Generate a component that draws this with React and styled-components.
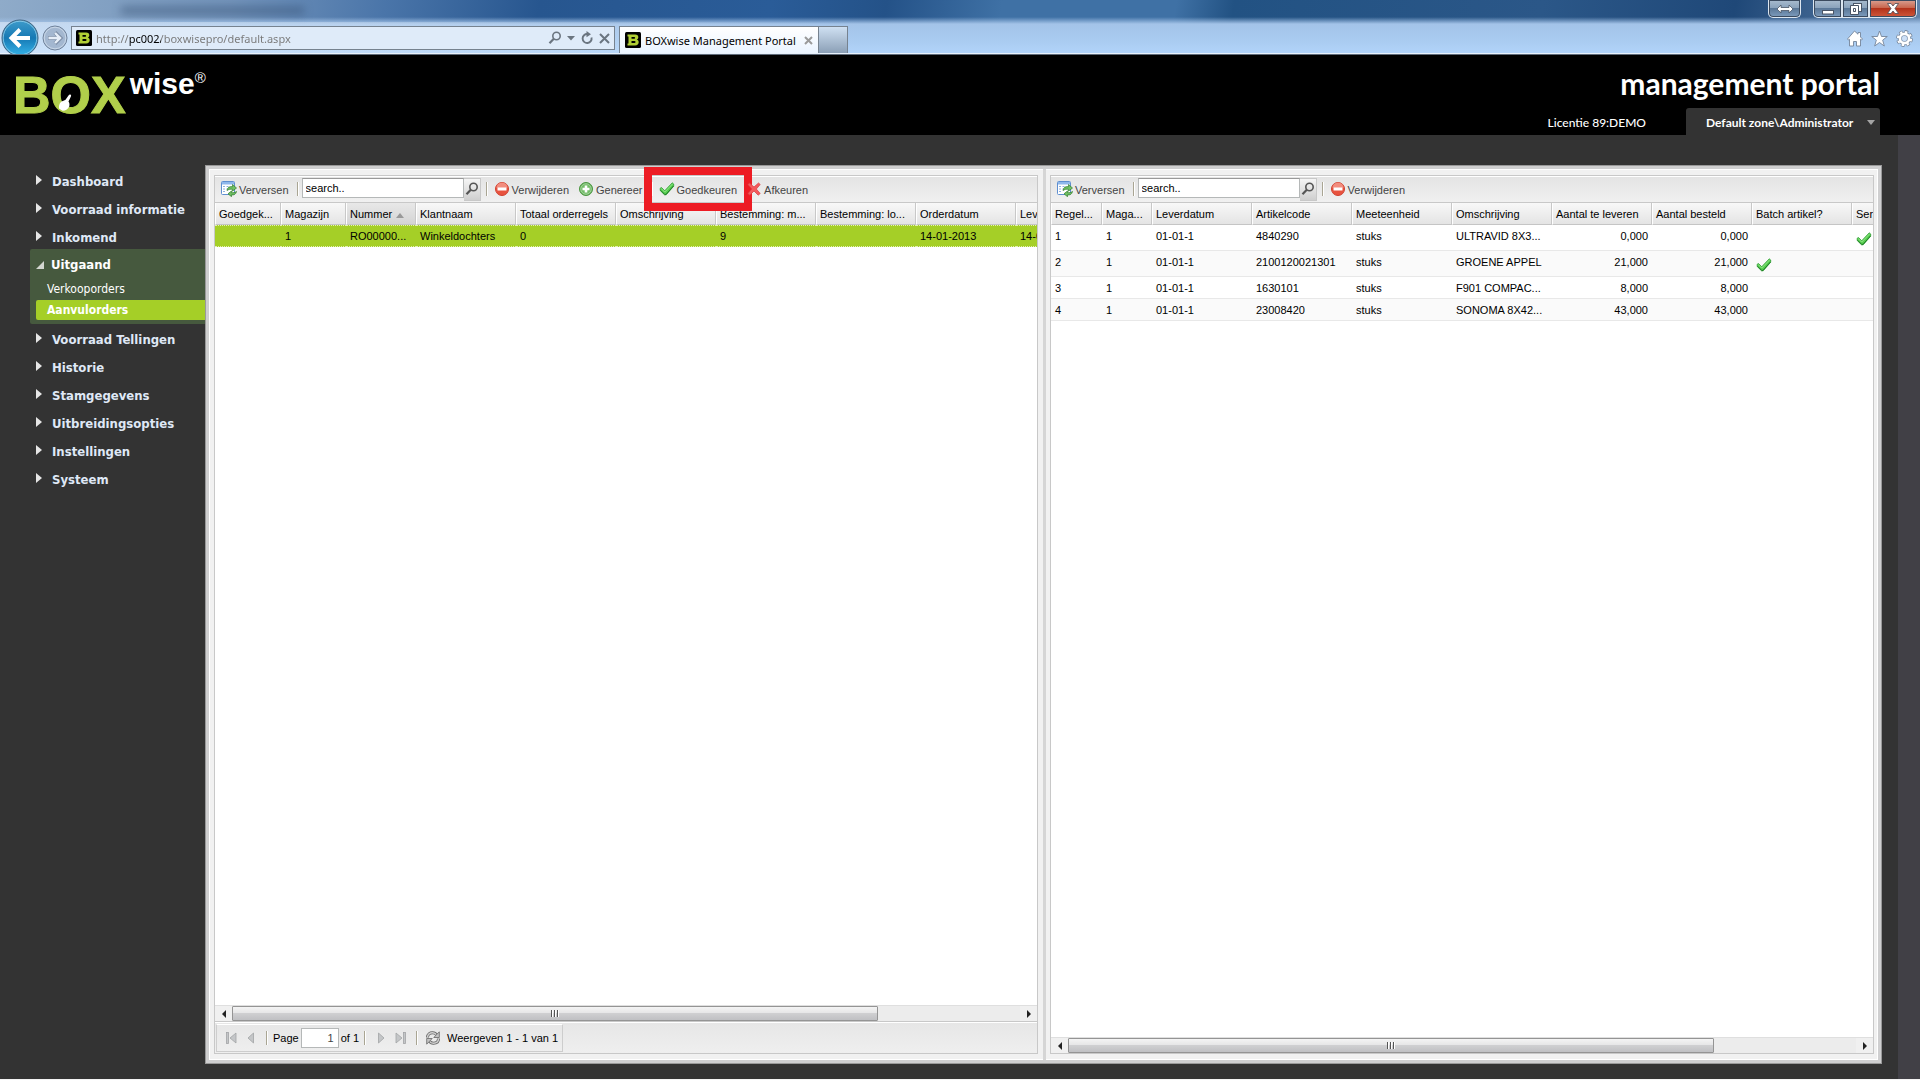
import React from 'react';
import styled, { createGlobalStyle, css } from 'styled-components';

const GlobalStyle = createGlobalStyle`
  *, *::before, *::after {
    box-sizing: border-box;
  }

  body {
    margin: 0;
    background: #333;
    font-family: "Liberation Sans", Arial, sans-serif;
    font-size: 11px;
    color: #000;
  }

  button, input {
    font: inherit;
    color: inherit;
  }

  button {
    border: 0;
    background: none;
    padding: 0;
    cursor: pointer;
  }

  svg {
    flex: none;
  }
`;

const Page = styled.div`
  display: flex;
  flex-direction: column;
  min-height: 100vh;
  overflow: hidden;
  border-bottom: 1px solid #f4f4f4;
`;

/* ---------- browser frame ---------- */

const Chrome = styled.div`
  position: relative;
  height: 55px;
  overflow: hidden;
  border-bottom: 1px solid #5f6b7a;
  box-shadow: inset 0 -1px 0 #e8f1fb;
  background:
    linear-gradient(to bottom, rgba(168, 203, 240, 0) 17px, #a3c3e8 24px, #a9cbf0 40px, #b2d4fa 54px),
    linear-gradient(100deg, #8fabc9 0, #7394bb 12%, #4a75a9 20%, #27568f 28%, #2a5c98 40%, #245288 46%, #3f71a5 52%, #3f71a5 61%, #225283 64%, #2b5788 80%, #1f4878 90%, #6385ac 100%);
`;

const TitleGhost = styled.div`
  position: absolute;
  left: 120px;
  top: 6px;
  width: 185px;
  height: 9px;
  border-radius: 5px;
  background: rgba(52, 78, 112, 0.45);
  filter: blur(4px);
`;

const NavGlow = styled.div`
  position: absolute;
  left: 0;
  top: 22px;
  width: 45%;
  height: 32px;
  background: linear-gradient(to right, rgba(235, 243, 252, 0.5), rgba(235, 243, 252, 0));
`;

const WindowButtons = styled.div`
  position: relative;
  display: flex;
  justify-content: flex-end;
  height: 22px;
  padding-right: 3px;
`;

const WindowButton = styled.button`
  display: flex;
  align-items: center;
  justify-content: center;
  width: ${p => p.$width}px;
  height: 18px;
  margin-left: ${p => p.$gap || 0}px;
  border: 1px solid #dce6f0;
  border-top: 0;
  border-radius: ${p => p.$radius || '0'};
  box-shadow: inset 0 0 0 1px #3b4a5e;
  background: ${p => p.$danger
    ? 'linear-gradient(#d9a193 0, #c9674f 45%, #b3331b 50%, #d0583c 100%)'
    : 'linear-gradient(#a9bccf 0, #8ba3bc 45%, #5b7898 50%, #7d9cbd 100%)'};
`;

const NavRow = styled.div`
  position: relative;
  display: flex;
  align-items: flex-start;
  height: 32px;
  padding: 4px 7px 0 1px;
`;

const BackButton = styled.button`
  width: 38px;
  height: 38px;
  margin-top: -7px;
  flex: none;
`;

const ForwardButton = styled.button`
  width: 26px;
  height: 26px;
  margin: -1px 3px 0 3px;
  flex: none;
`;

const AddressBar = styled.div`
  display: flex;
  align-items: center;
  flex: 0 1 544px;
  height: 24px;
  padding: 0 4px;
  gap: 4px;
  border: 1px solid #76828f;
  background: #dfebf9;
`;

const AddressInput = styled.input`
  flex: 1;
  min-width: 0;
  height: 20px;
  padding: 0;
  border: 0;
  outline: 0;
  font-family: "Noto Sans", sans-serif;
  font-size: 11px;
  color: transparent;
  background: linear-gradient(to right, #777 33px, #000 33px, #000 65px, #777 65px);
  background-clip: text;
  -webkit-background-clip: text;
`;

const AddressActions = styled.div`
  display: flex;
  align-items: center;
  gap: 5px;
`;

const IconButton = styled.button`
  display: flex;
  align-items: center;
  justify-content: center;
`;

const Tab = styled.div`
  display: flex;
  align-items: center;
  width: 200px;
  height: 27px;
  margin-left: 4px;
  padding: 0 5px;
  gap: 4px;
  border: 1px solid #76828f;
  border-bottom: 0;
  background: linear-gradient(#fff, #eaf4ff);
  font-family: "Noto Sans", sans-serif;
  font-size: 11px;
  white-space: nowrap;
`;

const TabTitle = styled.span`
  flex: 1;
`;

const NewTab = styled.button`
  width: 29px;
  height: 27px;
  border: 1px solid #76828f;
  border-left: 0;
  border-bottom: 0;
  background: linear-gradient(#cfe0f2, #8b9fb6);
`;

const ChromeTools = styled.div`
  display: flex;
  gap: 8px;
  margin: 4px 0 0 auto;
`;

/* ---------- application header ---------- */

const Header = styled.header`
  display: flex;
  justify-content: space-between;
  height: 80px;
  padding: 0 40px 0 13px;
  background: #000;
  color: #fff;
  font-family: Lato, sans-serif;
`;

const Logo = styled.div`
  position: relative;
  display: flex;
  align-items: flex-start;
  font-family: "Liberation Sans", Arial, sans-serif;
  font-weight: 700;
`;

const LogoBox = styled.span`
  margin-top: 12px;
  font-size: 52px;
  line-height: 56px;
  color: #b1cf4b;
  -webkit-text-stroke: 1px #b1cf4b;
`;

const LogoWise = styled.span`
  margin: 13px 0 0 4px;
  font-size: 30px;
  line-height: 32px;
`;

const LogoMark = styled.span`
  margin-top: 15px;
  font-size: 15px;
  line-height: 16px;
  font-weight: 400;
`;

const LogoHand = styled.svg`
  position: absolute;
  left: 45px;
  top: 39px;
`;

const HeaderSide = styled.div`
  display: flex;
  flex-direction: column;
  align-items: flex-end;
  justify-content: space-between;
`;

const PortalTitle = styled.h1`
  margin: 10px 0 0;
  font-size: 30px;
  line-height: 36px;
  font-weight: 700;
`;

const HeaderInfo = styled.div`
  display: flex;
  align-items: center;
  gap: 40px;
  font-size: 12px;
  font-weight: 500;
`;

const Licence = styled.span`
  padding-top: 2px;
`;

const ZoneButton = styled.button`
  display: flex;
  align-items: center;
  justify-content: space-between;
  width: 194px;
  height: 27px;
  padding: 2px 5px 0 20px;
  border-radius: 3px 3px 0 0;
  background: #333;
  font-weight: 700;
  white-space: nowrap;
`;

/* ---------- navigation ---------- */

const Body = styled.div`
  display: flex;
  flex: 1;
`;

const Sidebar = styled.nav`
  flex: none;
  width: 205px;
  padding: 32px 0 0 30px;
  font-family: "DejaVu Sans Condensed", "DejaVu Sans", Tahoma, sans-serif;
`;

const navLink = css`
  display: flex;
  align-items: center;
  color: #dfe8f6;
  text-decoration: none;
  white-space: nowrap;
`;

const NavItem = styled.a`
  ${navLink}
  height: 28px;
  padding-left: 6px;
  gap: 10px;
  font-size: 13px;
  font-weight: 700;
`;

const NavGroup = styled.div`
  display: flex;
  flex-direction: column;
  gap: 1px;
  margin: -2px 0 1px;
  padding-bottom: 4px;
  border-radius: 2px 0 0 2px;
  background: #46593e;

  ${NavItem} {
    height: 29px;
    padding-top: 2px;
    gap: 7px;
    color: #fff;
  }
`;

const SubItem = styled.a`
  ${navLink}
  height: 20px;
  margin-left: 6px;
  padding-left: 11px;
  border-radius: 2px 0 0 2px;
  font-size: 12px;
  color: #fff;
  font-weight: ${p => (p.$active ? 700 : 400)};
  background: ${p => (p.$active ? '#a5cf27' : 'transparent')};
`;

const Gutter = styled.div`
  width: 22px;
  margin-left: 16px;
  background: #414046;
`;

/* ---------- grid panels ---------- */

const Workspace = styled.main`
  display: flex;
  flex: 1;
  min-width: 0;
  margin: 30px 0 15px;
  border: 1px solid #999;
  box-shadow: inset 0 0 0 3px #cfcfd0, inset 0 0 0 4px #fff;
  background: #f1f1f1;
  padding: 9px 7px 9px 8px;
`;

const Splitter = styled.div`
  width: 3px;
  margin: -6px 4px -6px 5px;
  background: #d5d5d5;
`;

const Panel = styled.section`
  display: flex;
  flex-direction: column;
  flex: 1;
  min-width: 0;
  border: 1px solid #c8c8c8;
  background: #fff;
`;

const Toolbar = styled.div`
  display: flex;
  align-items: center;
  height: 27px;
  padding: 0 3px 2px;
  gap: 3px;
  border-top: 1px solid #fff;
  border-bottom: 1px solid #c8c8c8;
  background: linear-gradient(#e4e4e4, #f0f0f0);
  color: #444;
`;

const ToolButton = styled.button`
  position: relative;
  display: flex;
  align-items: center;
  height: 22px;
  padding: 0 3px;
  gap: 2px;
  white-space: nowrap;

  span {
    padding-top: 2px;
  }
`;

const Marker = styled.i`
  position: absolute;
  inset: -11px -12px;
  border: 8px solid #ed1c24;
  pointer-events: none;
`;

const Separator = styled.span`
  width: 2px;
  height: 14px;
  margin: 0 0 0 2px;
  border-left: 1px solid #a9a593;
  border-right: 1px solid #fff;
`;

const Search = styled.label`
  display: flex;
  align-items: flex-start;
  height: 21px;
`;

const SearchInput = styled.input`
  width: 162px;
  height: 20px;
  padding: 0 3px;
  border: 1px solid #b5b8b8;
  border-top-color: #999;
  outline: 0;
  background: #fff;
  color: #000;
`;

const SearchTrigger = styled.button`
  display: flex;
  justify-content: center;
  width: 17px;
  height: 23px;
  padding-top: 3px;
  border: 1px solid #c8c8c8;
  border-left: 0;
  background: linear-gradient(#f5f5f5, #cfcfcf);
`;

const GridView = styled.div`
  flex: 1;
  overflow: hidden;
`;

const Grid = styled.table`
  width: ${p => p.$width}px;
  table-layout: fixed;
  border-collapse: separate;
  border-spacing: 0;
`;

const HeadCell = styled.th`
  height: 22px;
  padding: 0 3px;
  border-left: 1px solid #fff;
  border-right: 1px solid #c8c8c8;
  border-bottom: 1px solid #c5c5c5;
  background: ${p => (p.$sorted
    ? 'linear-gradient(#e8e8e8, #d4d4d4)'
    : 'linear-gradient(#f8f8f8, #e4e4e4)')};
  font-weight: 400;
  text-align: left;
  white-space: nowrap;
  overflow: hidden;

  svg {
    margin-left: 4px;
  }
`;

const Cell = styled.td`
  height: ${p => (p.$tall ? 26 : 22)}px;
  padding: 1px 4px 0;
  border-bottom: 1px solid #e8e8e8;
  line-height: 20px;
  vertical-align: top;
  text-align: ${p => (p.$numeric ? 'right' : 'left')};
  white-space: nowrap;
  overflow: hidden;

  svg {
    display: block;
    margin-top: 5px;
  }
`;

const Row = styled.tr`
  ${Cell} {
    background: ${p => (p.$alt ? '#fafafa' : '#fff')};
  }

  ${p => p.$selected && css`
    ${Cell} {
      padding-top: 0;
      background: #a5cf27;
      border-top: 1px dotted #e3f0b4;
      border-bottom: 1px dotted #e3f0b4;
    }
  `}
`;

const ScrollBar = styled.div`
  display: flex;
  height: 16px;
  border-top: 1px solid #dfdfdf;
  background: #ececec;
`;

const ScrollArrow = styled.button`
  display: flex;
  align-items: center;
  justify-content: center;
  width: 17px;
  background: #f0f0f0;
`;

const ScrollTrack = styled.div`
  flex: 1;
`;

const ScrollThumb = styled.div`
  display: flex;
  align-items: center;
  justify-content: center;
  width: 82%;
  height: 15px;
  border: 1px solid #949494;
  border-radius: 1px;
  background: linear-gradient(#f4f4f4 0, #e6e6e7 45%, #cfcfd1 50%, #bfc0c3 100%);
`;

const PagerBar = styled.div`
  height: 32px;
  padding: 2px 1px;
  border-top: 1px solid #c8c8c8;
  box-shadow: inset 0 1px 0 #fff;
  background: linear-gradient(#e6e6e6, #efefef);
`;

const Pager = styled.div`
  display: inline-flex;
  align-items: center;
  height: 28px;
  padding: 0 4px;
  border: 1px solid #cdcdcd;
  border-top-color: #fff;
  white-space: nowrap;

  label {
    display: flex;
    align-items: center;
    gap: 2px;
  }
`;

const PageButton = styled.button`
  display: flex;
  align-items: center;
  justify-content: center;
  width: 20px;
  height: 20px;
`;

const PagerSeparator = styled(Separator)`
  margin: 0 5px;
`;

const PageInput = styled.input`
  width: 38px;
  height: 20px;
  padding: 0 4px 0 0;
  border: 1px solid #b5b8b8;
  outline: 0;
  background: #fff;
  color: #444;
  text-align: right;
`;

const PagerInfo = styled.span`
  padding-left: 4px;
`;

/* ---------- icons ---------- */

const BoxIcon = () => (
  <svg width="16" height="16" viewBox="0 0 16 16">
    <rect width="16" height="16" rx="1.5" fill="#000" />
    <path
      fillRule="evenodd"
      fill="#b1cf35"
      d="M2.5 2.5h7.6c2.2 0 3.2 1 3.2 2.7 0 1.2-.6 2-1.5 2.4 1.2.4 1.9 1.3 1.9 2.7 0 2-1.3 3.2-3.6 3.2H2.5v-2h1v-7h-1zM6.5 5v1.8h2.7c1.3 0 1.3-1.8 0-1.8zM6.5 9v2h3c1.4 0 1.4-2 0-2z"
    />
  </svg>
);

const RefreshGridIcon = () => (
  <svg width="16" height="16" viewBox="0 0 16 16">
    <rect x="0.5" y="0.5" width="13" height="13" rx="1" fill="#fff" stroke="#5f8fd0" />
    <rect x="1" y="1" width="12" height="2.5" fill="#8fb8ec" />
    <path d="M2 5.5h2M2 8h2M2 10.5h2M5.5 5.5h2M5.5 8h1" stroke="#8fb0dd" />
    <path d="M6 9.5c.3-3 2.5-4.3 5.5-3.8V3.5L15.500 7l-4 3.200V8.300C9.300 8 8 8.300 6 9.500z" fill="#6fbf62" stroke="#2f7d2b" strokeWidth=".7" />
    <path d="M15.500 10.500c-.5 2.700-2.400 3.700-5 3.400v1.800L7 12.800l3.500-2.900v1.700c2 .2 3.400 0 5-1.100z" fill="#6fbf62" stroke="#2f7d2b" strokeWidth=".7" />
  </svg>
);

const RemoveIcon = () => (
  <svg width="16" height="16" viewBox="0 0 16 16">
    <circle cx="8" cy="8" r="6.5" fill="#e8533f" stroke="#d0402f" />
    <path d="M2.500 7a5.500 5.500 0 0 1 11 0z" fill="#f28d7e" />
    <rect x="3.5" y="6.5" width="9" height="3" rx=".5" fill="#fff" />
  </svg>
);

const AddIcon = () => (
  <svg width="16" height="16" viewBox="0 0 16 16">
    <circle cx="8" cy="8" r="6.5" fill="#55a84b" stroke="#4b9641" />
    <circle cx="8" cy="8" r="5.3" fill="#74bd69" stroke="#b5dcae" strokeWidth=".8" />
    <path d="M8 4.500v7M4.500 8h7" stroke="#fff" strokeWidth="2.6" />
  </svg>
);

const CheckIcon = () => (
  <svg width="16" height="16" viewBox="0 0 16 16">
    <path
      d="M1.200 7.200l1.300-.7 3.200 3.300 7.600-8L14.700 3v2.200L7.200 13.800H5.500L1.200 9.500z"
      fill="#58cf50"
      stroke="#2f9a33"
      strokeWidth=".8"
    />
    <path d="M1.600 9.300l4.100 4.100h1.300L14.400 5" fill="none" stroke="#1f7d27" strokeWidth="1" />
    <path d="M2.300 7.600l3.400 3.500 8-8.300" fill="none" stroke="#9eeb93" strokeWidth=".8" />
  </svg>
);

const CrossIcon = () => (
  <svg width="16" height="16" viewBox="0 0 16 16">
    <path
      d="M3.500 2L8 6l4.500-4 1.700 1.500L10.300 8l3.900 4.500-2 1.700L8 10l-4.200 4.200-2-1.700L5.700 8 1.800 3.500z"
      fill="#f4595c"
      stroke="#d83a3d"
      strokeWidth=".7"
    />
  </svg>
);

const LensIcon = ({ size = 14, color = '#555' }) => (
  <svg width={size} height={size} viewBox="0 0 14 14" fill="none" stroke={color}>
    <circle cx="8.5" cy="5" r="3.7" strokeWidth="1.6" />
    <path d="M5.800 7.800L1.500 12.200" strokeWidth="2.2" />
  </svg>
);

const NavArrow = () => (
  <svg width="6" height="12" viewBox="0 0 6 12">
    <path d="M0 0l6 5-6 5z" fill="#e6e6e6" />
  </svg>
);

const NavArrowOpen = () => (
  <svg width="8" height="8" viewBox="0 0 8 8">
    <path d="M8 0v8H0z" fill="#d3d6d0" />
  </svg>
);

const ArrowHead = ({ left }) => (
  <svg width="4" height="8" viewBox="0 0 4 8">
    <path d={left ? 'M4 0v8L0 4z' : 'M0 0v8l4-4z'} fill="#222" />
  </svg>
);

const GripIcon = () => (
  <svg width="8" height="7" viewBox="0 0 8 7">
    <path d="M.5 0v7M3.500 0v7M6.500 0v7" stroke="#555" />
    <path d="M1.500 0v7M4.500 0v7M7.500 0v7" stroke="#fff" />
  </svg>
);

const PageArrow = ({ back, end }) => (
  <svg width="12" height="12" viewBox="0 0 12 12">
    <g transform={back ? 'matrix(-1 0 0 1 12 0)' : undefined} fill="#c4c6c8" stroke="#a2a4a6" strokeWidth=".8">
      <path d={end ? 'M1 1l6 5-6 5z' : 'M3.500 1l5.500 5-5.500 5z'} />
      {end && <rect x="8.5" y=".5" width="2" height="11" />}
    </g>
  </svg>
);

const ReloadIcon = () => (
  <svg width="16" height="16" viewBox="0 0 16 16" fill="none">
    <path d="M2.500 7.500C2.500 4 5 2.800 7.500 2.800c2 0 3.300.7 4.200 2.200" stroke="#666" strokeWidth="3" />
    <path d="M2.500 7.500C2.500 4 5 2.800 7.500 2.800c2 0 3.300.7 4.200 2.200" stroke="#d2d2d2" strokeWidth="1.4" />
    <path d="M14.300 1.800v5.700H8.800z" fill="#c4c4c4" stroke="#666" strokeWidth=".8" />
    <path d="M13.500 8.500c0 3.500-2.500 4.700-5 4.700-2 0-3.300-.7-4.200-2.200" stroke="#666" strokeWidth="3" />
    <path d="M13.500 8.500c0 3.500-2.500 4.700-5 4.700-2 0-3.300-.7-4.200-2.200" stroke="#d2d2d2" strokeWidth="1.4" />
    <path d="M1.700 14.200V8.500h5.500z" fill="#c4c4c4" stroke="#666" strokeWidth=".8" />
  </svg>
);

/* ---------- data ---------- */

const MENU_TOP = ['Dashboard', 'Voorraad informatie', 'Inkomend'];
const MENU_BOTTOM = ['Voorraad Tellingen', 'Historie', 'Stamgegevens', 'Uitbreidingsopties', 'Instellingen', 'Systeem'];

const ORDER_COLUMNS = [
  { label: 'Goedgek...', width: 66 },
  { label: 'Magazijn', width: 65 },
  { label: 'Nummer', width: 70, sorted: true },
  { label: 'Klantnaam', width: 100 },
  { label: 'Totaal orderregels', width: 100 },
  { label: 'Omschrijving', width: 100 },
  { label: 'Bestemming: m...', width: 100 },
  { label: 'Bestemming: lo...', width: 100 },
  { label: 'Orderdatum', width: 100 },
  { label: 'Leverdatum', width: 100 },
];

const ORDER_ROWS = [
  { cells: ['', '1', 'RO00000...', 'Winkeldochters', '0', '', '9', '', '14-01-2013', '14-01-2013'], selected: true },
];

const LINE_COLUMNS = [
  { label: 'Regel...', width: 51 },
  { label: 'Maga...', width: 50 },
  { label: 'Leverdatum', width: 100 },
  { label: 'Artikelcode', width: 100 },
  { label: 'Meeteenheid', width: 100 },
  { label: 'Omschrijving', width: 100 },
  { label: 'Aantal te leveren', width: 100, numeric: true },
  { label: 'Aantal besteld', width: 100, numeric: true },
  { label: 'Batch artikel?', width: 100 },
  { label: 'Serie artikel?', width: 100 },
];

const LINE_ROWS = [
  { cells: ['1', '1', '01-01-1', '4840290', 'stuks', 'ULTRAVID 8X3...', '0,000', '0,000', '', <CheckIcon />], tall: true },
  { cells: ['2', '1', '01-01-1', '2100120021301', 'stuks', 'GROENE APPEL', '21,000', '21,000', <CheckIcon />, ''], tall: true },
  { cells: ['3', '1', '01-01-1', '1630101', 'stuks', 'F901 COMPAC...', '8,000', '8,000', '', ''] },
  { cells: ['4', '1', '01-01-1', '23008420', 'stuks', 'SONOMA 8X42...', '43,000', '43,000', '', ''] },
];

/* ---------- components ---------- */

const BrowserFrame = () => (
  <Chrome>
    <TitleGhost />
    <NavGlow />
    <WindowButtons>
      <WindowButton $width={33} $radius="0 0 5px 5px" aria-label="Full screen">
        <svg width="18" height="10" viewBox="0 0 18 10">
          <path d="M1 5l4-4v2.500h8V1l4 4-4 4V6.500H5V9z" fill="#fff" stroke="#4a5566" strokeWidth=".8" />
        </svg>
      </WindowButton>
      <WindowButton $width={29} $gap={12} $radius="0 0 0 5px" aria-label="Minimize">
        <svg width="12" height="12" viewBox="0 0 12 12">
          <rect x=".5" y="7.5" width="11" height="3.5" fill="#fff" stroke="#4a5566" />
        </svg>
      </WindowButton>
      <WindowButton $width={27} aria-label="Restore">
        <svg width="12" height="12" viewBox="0 0 12 12" fill="#fff" stroke="#4a5566">
          <rect x="3.5" y=".5" width="8" height="8" />
          <path fillRule="evenodd" d="M.5 2.500h8v9h-8zM3.500 5.500v3h2v-3z" />
        </svg>
      </WindowButton>
      <WindowButton $width={48} $radius="0 0 5px 0" $danger aria-label="Close">
        <svg width="12" height="11" viewBox="0 0 12 11">
          <path d="M.5.5h3.500l2 2.500 2-2.500h3.500L8 5.500l3.500 5H8L6 8l-2 2.500H.5L4 5.500z" fill="#fff" stroke="#4a4a55" strokeWidth=".8" />
        </svg>
      </WindowButton>
    </WindowButtons>
    <NavRow>
      <BackButton aria-label="Back">
        <svg width="38" height="38" viewBox="0 0 38 38">
          <defs>
            <linearGradient id="back" x1="0" y1="0" x2="0" y2="1">
              <stop offset="0" stopColor="#3f9ccb" />
              <stop offset=".5" stopColor="#1679b4" />
              <stop offset="1" stopColor="#35b4ea" />
            </linearGradient>
          </defs>
          <circle cx="19" cy="19" r="18" fill="url(#back)" stroke="#44647f" />
          <circle cx="19" cy="19" r="16.8" fill="none" stroke="#9ad3ee" strokeWidth=".8" />
          <path d="M29 19H11M19 10.500L10.500 19l8.500 8.500" fill="none" stroke="#fff" strokeWidth="4" />
        </svg>
      </BackButton>
      <ForwardButton aria-label="Forward">
        <svg width="26" height="26" viewBox="0 0 26 26">
          <circle cx="13" cy="13" r="12" fill="#a3b7d0" stroke="#71839b" />
          <circle cx="13" cy="13" r="10.8" fill="none" stroke="#d3dfee" strokeWidth=".8" />
          <path d="M6 13h12M13 7.500l5.500 5.500-5.500 5.500" fill="none" stroke="#7f90a8" strokeWidth="4" />
          <path d="M6.500 13h11M13 8l5 5-5 5" fill="none" stroke="#e6eef8" strokeWidth="2.4" />
        </svg>
      </ForwardButton>
      <AddressBar>
        <BoxIcon />
        <AddressInput aria-label="Address" defaultValue="http://pc002/boxwisepro/default.aspx" />
        <AddressActions>
          <IconButton aria-label="Search"><LensIcon color="#6b7580" /></IconButton>
          <IconButton aria-label="Show address list">
            <svg width="8" height="5" viewBox="0 0 8 5"><path d="M0 0h8L4 4.500z" fill="#6b7580" /></svg>
          </IconButton>
          <IconButton aria-label="Refresh">
            <svg width="14" height="14" viewBox="0 0 14 14">
              <path d="M11.500 6.500a4.500 4.500 0 1 1-4-3.500" fill="none" stroke="#6b7580" strokeWidth="1.9" />
              <path d="M6.500 0l4.500 3.200-4.500 3z" fill="#6b7580" />
            </svg>
          </IconButton>
          <IconButton aria-label="Stop">
            <svg width="11" height="11" viewBox="0 0 11 11"><path d="M1 1l9 9M10 1l-9 9" stroke="#6b7580" strokeWidth="2" /></svg>
          </IconButton>
        </AddressActions>
      </AddressBar>
      <Tab>
        <BoxIcon />
        <TabTitle>BOXwise Management Portal</TabTitle>
        <IconButton aria-label="Close tab">
          <svg width="9" height="9" viewBox="0 0 9 9"><path d="M1 1l7 7M8 1l-7 7" stroke="#9a9a9a" strokeWidth="2" /></svg>
        </IconButton>
      </Tab>
      <NewTab aria-label="New tab" />
      <ChromeTools>
        <IconButton aria-label="Home">
          <svg width="17" height="17" viewBox="0 0 17 17">
            <path d="M8.500 1L12 4.200V2.500h2.500V7l2 2-1 1-1-.7V16h-4v-4.500h-3V16h-4V9.300l-1 .7-1-1z" fill="#fff" stroke="#75859a" strokeWidth=".9" />
          </svg>
        </IconButton>
        <IconButton aria-label="Favorites">
          <svg width="17" height="17" viewBox="0 0 17 17">
            <path d="M8.500 1l2 5.500h5.800l-4.600 3.600L13.300 16l-4.800-3.500L3.700 16l1.600-5.900L.7 6.500h5.800z" fill="#fff" stroke="#75859a" strokeWidth=".9" />
          </svg>
        </IconButton>
        <IconButton aria-label="Tools">
          <svg width="17" height="17" viewBox="0 0 17 17">
            <circle cx="8.5" cy="8.5" r="6.8" fill="none" stroke="#75859a" strokeWidth="3.2" strokeDasharray="3.3 2.04" />
            <circle cx="8.5" cy="8.5" r="4.8" fill="none" stroke="#75859a" strokeWidth="4" />
            <circle cx="8.5" cy="8.5" r="6.6" fill="none" stroke="#fff" strokeWidth="2" strokeDasharray="2.4 2.78" strokeDashoffset="-.4" />
            <circle cx="8.5" cy="8.5" r="4.6" fill="none" stroke="#fff" strokeWidth="2.6" />
            <circle cx="8.5" cy="8.5" r="2.4" fill="#cfe0f5" />
          </svg>
        </IconButton>
      </ChromeTools>
    </NavRow>
  </Chrome>
);

const AppHeader = () => (
  <Header>
    <Logo>
      <LogoBox>BOX</LogoBox>
      <LogoWise>wise</LogoWise>
      <LogoMark>®</LogoMark>
      <LogoHand width="14" height="18" viewBox="0 0 14 18">
        <path d="M12.200.5c1 .3 1.100 1 .7 1.900L10.500 7.500c1.300 1.500 1.200 4 .5 5.500-1.300 2.500-4 4-6.500 3.800L1 14.500c-.3-2.500.3-5 2-6.500 1.500-1.200 3.500-1.500 4.500-2.300l3-4.200c.5-.7 1-1.100 1.700-1z" fill="#fff" />
      </LogoHand>
    </Logo>
    <HeaderSide>
      <PortalTitle>management portal</PortalTitle>
      <HeaderInfo>
        <Licence>Licentie 89:DEMO</Licence>
        <ZoneButton>
          Default zone\Administrator
          <svg width="8" height="5" viewBox="0 0 8 5"><path d="M0 0h8L4 5z" fill="#a5a5a5" /></svg>
        </ZoneButton>
      </HeaderInfo>
    </HeaderSide>
  </Header>
);

const Menu = ({ items }) => items.map(item => (
  <NavItem href="#" key={item}>
    <NavArrow />
    {item}
  </NavItem>
));

const DataGrid = ({ columns, rows }) => (
  <GridView>
    <Grid $width={columns.reduce((sum, column) => sum + column.width, 0)}>
      <colgroup>
        {columns.map(column => <col key={column.label} width={column.width} />)}
      </colgroup>
      <thead>
        <tr>
          {columns.map(column => (
            <HeadCell key={column.label} $sorted={column.sorted}>
              {column.label}
              {column.sorted && (
                <svg width="8" height="5" viewBox="0 0 8 5"><path d="M4 0l4 5H0z" fill="#999" /></svg>
              )}
            </HeadCell>
          ))}
        </tr>
      </thead>
      <tbody>
        {rows.map((row, index) => (
          <Row key={index} $alt={index % 2 === 1} $selected={row.selected}>
            {row.cells.map((cell, i) => (
              <Cell key={i} $tall={row.tall} $numeric={columns[i].numeric}>{cell}</Cell>
            ))}
          </Row>
        ))}
      </tbody>
    </Grid>
  </GridView>
);

const SearchBox = () => (
  <Search>
    <SearchInput aria-label="Search" defaultValue="search.." />
    <SearchTrigger aria-label="Search"><LensIcon size={14} /></SearchTrigger>
  </Search>
);

const HorizontalScroll = () => (
  <ScrollBar>
    <ScrollArrow aria-label="Scroll left"><ArrowHead left /></ScrollArrow>
    <ScrollTrack>
      <ScrollThumb><GripIcon /></ScrollThumb>
    </ScrollTrack>
    <ScrollArrow aria-label="Scroll right"><ArrowHead /></ScrollArrow>
  </ScrollBar>
);

const OrdersPanel = () => (
  <Panel>
    <Toolbar>
      <ToolButton><RefreshGridIcon /><span>Verversen</span></ToolButton>
      <Separator />
      <SearchBox />
      <Separator />
      <ToolButton><RemoveIcon /><span>Verwijderen</span></ToolButton>
      <ToolButton><AddIcon /><span>Genereer</span></ToolButton>
      <Separator />
      <ToolButton>
        <CheckIcon />
        <span>Goedkeuren</span>
        <Marker />
      </ToolButton>
      <ToolButton><CrossIcon /><span>Afkeuren</span></ToolButton>
    </Toolbar>
    <DataGrid columns={ORDER_COLUMNS} rows={ORDER_ROWS} />
    <HorizontalScroll />
    <PagerBar>
      <Pager>
        <PageButton aria-label="First page"><PageArrow back end /></PageButton>
        <PageButton aria-label="Previous page"><PageArrow back /></PageButton>
        <PagerSeparator />
        <label>
          Page
          <PageInput defaultValue="1" />
          of 1
        </label>
        <PagerSeparator />
        <PageButton aria-label="Next page"><PageArrow /></PageButton>
        <PageButton aria-label="Last page"><PageArrow end /></PageButton>
        <PagerSeparator />
        <PageButton aria-label="Reload"><ReloadIcon /></PageButton>
        <PagerInfo>Weergeven 1 - 1 van 1</PagerInfo>
      </Pager>
    </PagerBar>
  </Panel>
);

const LinesPanel = () => (
  <Panel>
    <Toolbar>
      <ToolButton><RefreshGridIcon /><span>Verversen</span></ToolButton>
      <Separator />
      <SearchBox />
      <Separator />
      <ToolButton><RemoveIcon /><span>Verwijderen</span></ToolButton>
    </Toolbar>
    <DataGrid columns={LINE_COLUMNS} rows={LINE_ROWS} />
    <HorizontalScroll />
  </Panel>
);

const App = () => (
  <>
    <GlobalStyle />
    <Page>
      <BrowserFrame />
      <AppHeader />
      <Body>
        <Sidebar>
          <Menu items={MENU_TOP} />
          <NavGroup>
            <NavItem href="#">
              <NavArrowOpen />
              Uitgaand
            </NavItem>
            <SubItem href="#">Verkooporders</SubItem>
            <SubItem href="#" $active>Aanvulorders</SubItem>
          </NavGroup>
          <Menu items={MENU_BOTTOM} />
        </Sidebar>
        <Workspace>
          <OrdersPanel />
          <Splitter />
          <LinesPanel />
        </Workspace>
        <Gutter />
      </Body>
    </Page>
  </>
);

export default App;
